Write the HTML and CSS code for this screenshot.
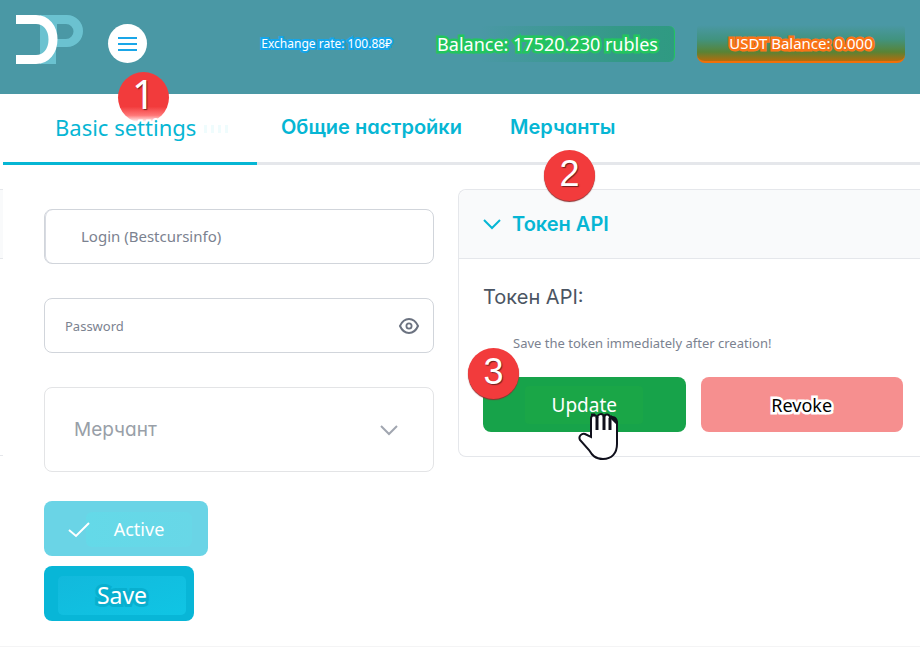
FILE: index.html
```
<!DOCTYPE html>
<html lang="ru">
<head>
<meta charset="utf-8">
<meta name="viewport" content="width=device-width, initial-scale=1">
<title>Basic settings</title>
<link rel="stylesheet" href="styles.css">
</head>
<body>
<header class="topbar">
  <svg class="logo" width="68" height="50" viewBox="0 0 68 50" aria-hidden="true">
    <path d="M24 0H51A16 16 0 0 1 51 32H40V49H24ZM41 9V24H50A7.500 7.500 0 0 0 50 9Z" fill="#6bc2d0" fill-rule="evenodd"/>
    <path d="M0 4.500H20C30 4.500 37 13 37 24.500S30 44.500 20 44.500H0" fill="none" stroke="#fff" stroke-width="9"/>
  </svg>
  <button class="menu" type="button" aria-label="Menu">
    <svg width="19" height="14" viewBox="0 0 19 14"><path d="M0 1H19M0 7H19M0 13H19" stroke="#1aa6e8" stroke-width="2"/></svg>
  </button>
  <span class="stat rate">Exchange rate: 100.88₽</span>
  <span class="stat balance">Balance: 17520.230 rubles</span>
  <span class="stat usdt">USDT Balance: 0.000</span>
</header>
<nav class="tabs">
  <a class="tab active" href="#basic"><span class="badge one">1</span><span class="label">Basic settings</span><span class="trail"></span></a>
  <a class="tab" href="#common">Общие настройки</a>
  <a class="tab" href="#merchants">Мерчанты</a>
</nav>
<main class="content">
  <div class="edge"></div>
  <form class="form">
    <div class="field">
      <input class="text login" type="text" aria-label="Login" placeholder="Login (Bestcursinfo)">
    </div>
    <div class="field">
      <input class="text password" type="password" aria-label="Password" placeholder="Password">
      <svg class="icon eye" width="22" height="18" viewBox="0 0 22 18" fill="none" stroke="#6b7280" stroke-width="2"><path d="M2 9C4 4.500 7.200 2 11 2S18 4.500 20 9C18 13.500 14.800 16 11 16S4 13.500 2 9Z"/><circle cx="11" cy="9" r="2.600" stroke-width="1.800"/></svg>
    </div>
    <div class="field">
      <select class="merchant" aria-label="Мерчант"><option>Мерчант</option></select>
      <svg class="icon chevron" width="18" height="12" viewBox="0 0 18 12" fill="none" stroke="#a1a6b0" stroke-width="2"><path d="M1 2L9 10L17 2"/></svg>
    </div>
    <button class="btn toggle" type="button" aria-pressed="true">
      <svg width="22" height="16" viewBox="0 0 22 16" fill="none" stroke="#fff" stroke-width="2"><path d="M1 8L8 14L21 1"/></svg>
      <span class="toggle-label">Active</span>
    </button>
    <button class="btn save" type="button"><span class="save-label">Save</span></button>
  </form>
  <section class="panel">
    <span class="badge two">2</span>
    <h2 class="panel-head">
      <svg width="18" height="12" viewBox="0 0 18 12" fill="none" stroke="#06b6d4" stroke-width="2"><path d="M1 2L9 10L17 2"/></svg>
      Токен API
    </h2>
    <div class="panel-body">
      <p class="token">Токен API:</p>
      <p class="hint">Save the token immediately after creation!</p>
      <div class="actions">
        <div class="action">
          <button class="btn update" type="button"><span class="update-label">Update</span></button>
          <span class="badge three">3</span>
          <svg class="hand" width="42" height="50" viewBox="0 0 42 50" aria-hidden="true">
            <path d="M13 26V8C13 3 18 3 19 7C20 2 25 2 26 6C27 2 32 3 32 7C34 5 39 6 39 12V33C39 42 34 48 25 48C17 48 14 44 11 39L2 29C0 25 4 22 7 23Z" fill="#fff" stroke="#10101c" stroke-width="2"/>
            <path d="M19 6V19M26 5V19M32 7V19" fill="none" stroke="#10101c" stroke-width="3"/>
            <path d="M13 4H17M32 5L39 12" fill="none" stroke="#10101c" stroke-width="3"/>
          </svg>
        </div>
        <div class="action">
          <button class="btn revoke" type="button">Revoke</button>
        </div>
      </div>
    </div>
  </section>
</main>
</body>
</html>
```
FILE: styles.css
```
* { box-sizing: border-box; }

body {
  margin: 0;
  min-height: 100vh;
  border-bottom: 1px solid #f4f4f5;
  background: #fff;
  font-family: "Noto Sans", sans-serif;
}

button, input, select { font-family: inherit; }

.topbar {
  display: flex;
  align-items: center;
  height: 94px;
  padding: 0 15px 7px 16px;
  background: #4a98a5;
}

.logo { flex: none; margin: 0 24px 7px 0; }

.menu {
  display: flex;
  align-items: center;
  justify-content: center;
  width: 39px;
  height: 39px;
  padding: 0;
  border: 0;
  border-radius: 50%;
  background: #fff;
}

.stat {
  color: #fff;
  line-height: 36px;
  white-space: nowrap;
  paint-order: stroke fill;
}

.rate {
  margin-left: auto;
  font-size: 12px;
  -webkit-text-stroke: 4px #14a5e9;
}

.balance {
  margin-left: 40px;
  padding: 0 16px 0 5px;
  border-radius: 6px;
  border-right: 1px solid #22c55e;
  background: linear-gradient(90deg, #4a98a5 20%, #339986 80%, #2f9a82);
  font-size: 18px;
  -webkit-text-stroke: 5px #22c55e;
}

.usdt {
  width: 208px;
  margin-left: 22px;
  border-bottom: 2px solid #f07009;
  border-radius: 4px 4px 8px 8px;
  background: linear-gradient(#4a98a5, #41937f 40%, #598335 75%, #b56c0c);
  font-size: 15px;
  text-align: center;
  -webkit-text-stroke: 5px #f97316;
}

.tabs {
  display: flex;
  height: 71px;
  margin-left: 3px;
  border-bottom: 3px solid #e5e7eb;
}

.tab {
  position: relative;
  height: 71px;
  padding: 0 24px;
  color: #06b6d4;
  font: 600 20px/66px Inter, sans-serif;
  font-feature-settings: "cv11";
  text-decoration: none;
  white-space: nowrap;
}

.tab.active {
  width: 254px;
  padding: 0 0 0 52px;
  border-bottom: 3px solid #06b6d4;
  font: 400 22px/66px "Noto Sans", sans-serif;
}

.label {
  position: relative;
  -webkit-text-stroke: 4px #fff;
  paint-order: stroke fill;
}

.trail {
  position: absolute;
  top: 31px;
  left: 197px;
  width: 30px;
  height: 8px;
  background: repeating-linear-gradient(90deg, #fff 0 4px, #effcfd 4px 7px);
}

.badge {
  position: absolute;
  width: 51px;
  height: 51px;
  border-radius: 50%;
  background: #f23b3c;
  color: #fff;
  font: 400 36px/48px "Liberation Sans", sans-serif;
  text-align: center;
  text-shadow: 1px 1px 1px #702020;
  box-shadow: 0 1px 1px #8a3030;
}

.badge.one {
  top: -22px;
  left: 115px;
  background: linear-gradient(#f23b3c 68%, #f77 85%, #fff 98%);
  box-shadow: none;
  font: 400 40px/44px "Noto Sans", sans-serif;
}

.badge.two { top: -40px; left: 85px; }

.badge.three { top: -29px; left: -15px; }

.content {
  display: grid;
  grid-template-columns: 3px minmax(0, 455fr) minmax(0, 462fr);
  align-items: start;
  padding-top: 24px;
}

.edge {
  height: 267px;
  border-top: 1px solid #e5e7eb;
  border-bottom: 1px solid #e5e7eb;
  background: linear-gradient(#f9fafb 68px, #e5e7eb 68px 69px, #fff 69px);
}

.form {
  display: flex;
  flex-direction: column;
  align-items: flex-start;
  margin: 0 24px 0 41px;
  padding-top: 20px;
}

.field {
  position: relative;
  width: 100%;
  margin-bottom: 34px;
}

.field:nth-child(3) { margin-bottom: 29px; }

.text, .merchant {
  display: block;
  width: 100%;
  height: 55px;
  border: 1px solid #d1d5db;
  border-radius: 8px;
  background: #fff;
  color: #7b8290;
}

.text::placeholder { color: #7b8290; opacity: 1; }

.login {
  padding: 0 36px 2px;
  box-shadow: inset 1px 0 #d8dbe2;
  font-size: 15px;
}

.password { padding: 0 48px 0 20px; font-size: 13px; }

.merchant {
  height: 85px;
  padding: 0 60px 0 29px;
  border-color: #e3e4e6;
  color: #999fa8;
  appearance: none;
  font: 400 19px/24px Inter, sans-serif;
  font-feature-settings: "cv11";
}

.icon {
  position: absolute;
  top: 50%;
  transform: translateY(-50%);
  pointer-events: none;
}

.eye { right: 14px; }

.chevron { right: 36px; }

.btn {
  display: flex;
  align-items: center;
  justify-content: center;
  height: 55px;
  padding: 0;
  border: 0;
  border-radius: 8px;
  color: #fff;
  font-size: 18px;
}

.toggle {
  width: 164px;
  margin-bottom: 10px;
  padding: 2px 0 0 24px;
  background: #6ad4e6;
  justify-content: flex-start;
}

.toggle-label {
  width: 106px;
  margin-left: -4px;
  border-radius: 6px;
  background: linear-gradient(90deg, #64d9e8, #68d7e7);
  line-height: 35px;
}

.toggle svg { position: relative; flex: none; }

.save {
  width: 150px;
  padding: 3px 0 0 6px;
  background: #08b6d7;
  font-size: 23px;
}

.save-label {
  width: 128px;
  border-radius: 5px;
  background: linear-gradient(160deg, #12b9dc, #10c5e4);
  line-height: 39px;
  -webkit-text-stroke: 6px #08afcf;
  paint-order: stroke fill;
}

.panel {
  position: relative;
  border: 1px solid #e5e7eb;
  border-right: 0;
  border-radius: 8px 0 0 8px;
}

.panel-head {
  display: flex;
  align-items: center;
  gap: 11px;
  height: 69px;
  margin: 0;
  padding-left: 24px;
  border-bottom: 1px solid #e5e7eb;
  border-radius: 8px 0 0 0;
  background: #f9fafb;
  color: #06b6d4;
  font: 600 20px/24px Inter, sans-serif;
}

.panel-body { padding: 24px 17px 24px 24px; }

.token {
  margin: 0;
  color: #4b5563;
  font: 400 20px/28px Inter, sans-serif;
}

.hint {
  margin: 22px 0 24px 30px;
  color: #7b8290;
  font-size: 13px;
  line-height: 20px;
}

.actions { display: flex; gap: 15px; }

.action { position: relative; flex: 1; }

.action .btn { width: 100%; }

.update { background: #17a34a; font-size: 19px; }

.update-label {
  width: 118px;
  border-radius: 4px;
  background: #1aa647;
  line-height: 38px;
}

.revoke {
  background: #f68f8f;
  color: #000;
  font-size: 18px;
  -webkit-text-stroke: 5px #fff;
  paint-order: stroke fill;
}

.hand { position: absolute; top: 34px; left: 95px; }
```
